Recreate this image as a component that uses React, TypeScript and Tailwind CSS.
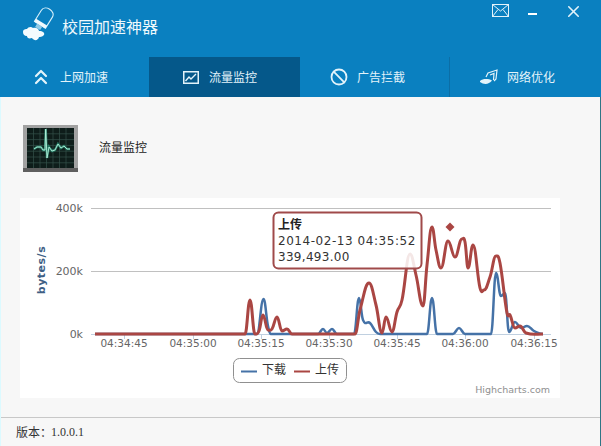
import { ChevronsUp, Ban, X } from "lucide-react";

const CJK = "font-['Noto_Sans_CJK_SC','Noto_Sans',sans-serif]";

const blue: [number, number][] = [
  [95, 334], [257, 334], [263.5, 299], [268, 326], [271, 334], [318, 334], [323, 329], [327, 333], [332, 329],
  [337, 334], [354, 334], [359, 298], [363, 320], [370, 323], [376, 332], [380, 334], [427, 334], [432, 298], [437, 334],
  [453, 334], [459, 328], [465, 334], [491, 334], [496, 273], [501, 296], [505, 293], [509, 332], [515, 322], [521, 328],
  [527, 326], [534, 331], [543, 334],
];

const red: [number, number][] = [
  [95, 334], [245, 334], [250, 300], [255, 334], [259, 331], [263, 315], [268, 330], [272, 329], [277, 317], [282, 331],
  [287, 329], [292, 334], [355, 334], [360, 310], [369, 283], [376, 305], [382, 333], [386, 317], [392, 332], [397, 312],
  [402, 300], [410, 254], [416, 275], [423, 306], [427, 265], [432, 227], [436, 250], [441, 268], [448, 241], [455, 257],
  [462, 239], [465, 242], [468, 268], [473, 245], [480, 288], [484, 290], [490, 277], [496, 256], [500, 263], [507, 313],
  [510, 315], [515, 328], [520, 326], [526, 333], [543, 334],
];

// hermite curve with slopes from the neighbours, so x never runs backwards on long flat parts
function toPath(pts: [number, number][]) {
  const slope = (i: number) => {
    if (i === 0 || i === pts.length - 1) return 0;
    const a = pts[i - 1];
    const b = pts[i];
    const c = pts[i + 1];
    // flat on a local peak or valley
    if ((b[1] - a[1]) * (c[1] - b[1]) <= 0) return 0;
    return (c[1] - a[1]) / (c[0] - a[0]);
  };
  let d = `M${pts[0][0]} ${pts[0][1]}`;
  for (let i = 0; i < pts.length - 1; i++) {
    const p1 = pts[i];
    const p2 = pts[i + 1];
    const dx = (p2[0] - p1[0]) / 2.4;
    const c1y = p1[1] + slope(i) * dx;
    const c2y = p2[1] - slope(i + 1) * dx;
    d += ` C${(p1[0] + dx).toFixed(1)} ${c1y.toFixed(1)} ${(p2[0] - dx).toFixed(1)} ${c2y.toFixed(1)} ${p2[0]} ${p2[1]}`;
  }
  return d;
}

const xLabels = [
  { x: 124, t: "04:34:45" },
  { x: 193, t: "04:35:00" },
  { x: 261, t: "04:35:15" },
  { x: 329, t: "04:35:30" },
  { x: 397, t: "04:35:45" },
  { x: 465, t: "04:36:00" },
  { x: 534, t: "04:36:15" },
];

function Logo() {
  return (
    <svg width="36" height="36" viewBox="0 0 36 36" fill="none">
      <g transform="translate(23.5 10.5) rotate(32)">
        <path d="M-6.5 8.5V-4.5C-6.5 -11.5 6.5 -11.5 6.5 -4.5V8.5Z" stroke="#d9f1fb" strokeWidth="1.1" />
        <rect x="-6.5" y="5.5" width="13" height="3.5" fill="#f0f9fd" />
        <rect x="-3" y="9" width="6" height="4" fill="#8fcbe8" />
      </g>
      <path d="M2 25 C2 22 5 22 6 22 C7 20 10 19 12 21 C15 20 18 22 18 24 C22 24 24 26 23 28 C21 30 19 30 18 30 C17 34 13 34 11 31 C8 32 6 31 6 29 C3 29 2 27 2 25 Z" fill="#f4fbfe" />
    </svg>
  );
}

function MonitorIcon() {
  const lines = [];
  for (let i = 1; i < 7; i++) lines.push(<path key={`v${i}`} d={`M${4 + i * 6.5} 3V43M4 ${3 + i * 5.8}H51`} stroke="#34524a" strokeWidth="0.7" />);
  const trace = "M11 24 L14 22 L18 22 L20 25 L22 25 L22.7 4 L24 33 L26 22 L29 26 L32 25 L35 19 L38 23 L41 21 L44 24 L47 24";
  return (
    <svg width="55" height="47" viewBox="0 0 55 47">
      <rect x="0" y="0" width="55" height="47" fill="#a2a2a2" />
      <rect x="0" y="43" width="55" height="4" fill="#5f5f5f" />
      <rect x="4" y="3" width="47" height="40" fill="#0e1d1a" />
      {lines}
      <path d={trace} fill="none" stroke="#2f9c80" strokeWidth="2.4" opacity="0.7" />
      <path d={trace} fill="none" stroke="#b4f3dc" strokeWidth="0.9" />
    </svg>
  );
}

function Chart() {
  return (
    <svg width="540" height="200" viewBox="20 198 540 200" className="block bg-white">
      <g stroke="#c0c0c0" strokeWidth="1">
        <path d="M91 208.5H551M91 271.5H551" />
        <path d="M91 334.5H551" stroke="#c0d0e0" />
        {xLabels.map((l) => (
          <path key={l.t} d={`M${l.x + 0.5} 334V339`} stroke="#c0d0e0" />
        ))}
      </g>
      <g fontFamily="'DejaVu Sans', sans-serif" fontSize="11" fill="#666">
        <text x="83" y="212" textAnchor="end">400k</text>
        <text x="83" y="275" textAnchor="end">200k</text>
        <text x="83" y="338" textAnchor="end">0k</text>
        {xLabels.map((l) => (
          <text key={l.t} x={l.x} y="347" textAnchor="middle" fontSize="10.5">{l.t}</text>
        ))}
        <text x="0" y="0" transform="translate(45 270) rotate(-90)" textAnchor="middle" fontSize="11" fontWeight="bold" letterSpacing="0.5" fill="#3f5f85">bytes/s</text>
        <text x="550" y="393" textAnchor="end" fontSize="9.5" fill="#909090">Highcharts.com</text>
      </g>

      <path d={toPath(blue)} fill="none" stroke="#4572a7" strokeWidth="2.5" strokeLinejoin="round" />
      <path d={toPath(red)} fill="none" stroke="#aa4643" strokeWidth="3" strokeLinejoin="round" />
      <path d="M450 222.5L454.5 227L450 231.5L445.5 227Z" fill="#aa4643" />

      <rect x="273.5" y="212.5" width="148" height="56" rx="5" fill="#ffffff" fillOpacity="0.87" stroke="#a04a4a" strokeWidth="2" />
      <g fontFamily="'DejaVu Sans', sans-serif" fontSize="12" fill="#333">
        <text x="278" y="229" fontFamily="'Noto Sans CJK SC', sans-serif" fontWeight="bold" fill="#222">上传</text>
        <text x="278" y="245" letterSpacing="0.55">2014-02-13 04:35:52</text>
        <text x="278" y="261" letterSpacing="0.3">339,493.00</text>
      </g>

      <rect x="233.5" y="358.5" width="113" height="24" rx="6" fill="#fff" stroke="#909090" />
      <path d="M241 371.5H257" stroke="#4572a7" strokeWidth="2" />
      <path d="M294 371.5H310" stroke="#aa4643" strokeWidth="2" />
      <g fontFamily="'Noto Sans CJK SC', sans-serif" fontSize="12" fill="#333">
        <text x="262" y="374">下载</text>
        <text x="315" y="374">上传</text>
      </g>
    </svg>
  );
}

function TabIcon({ name }: { name: string }) {
  if (name === "up") return <ChevronsUp size={24} strokeWidth={2.2} />;
  if (name === "ban") return <Ban size={18} strokeWidth={2.4} />;
  if (name === "chart")
    return (
      <svg width="16" height="13" viewBox="0 0 16 13" fill="none" stroke="currentColor">
        <rect x="0.75" y="0.75" width="14.5" height="11.5" strokeWidth="1.5" />
        <path d="M2.5 10L6 6L8 8L13 3" strokeWidth="1.4" />
      </svg>
    );
  return (
    <svg width="19" height="17" viewBox="0 0 19 17" fill="none" stroke="currentColor" strokeWidth="1.2">
      <path d="M7 8L9 4L18 1L17 10L15 12" />
      <path d="M11 6L15 4.5L14.5 11" />
      <path d="M1 12C4 9.5 9 9.5 13 11.5C10 15.5 5 16 1 13Z" fill="currentColor" stroke="none" />
    </svg>
  );
}

const tabs = [
  { label: "上网加速", icon: "up", w: "w-[149px]", gap: "gap-[7px]", pl: "pl-[29px]" },
  { label: "流量监控", icon: "chart", w: "w-[151px]", gap: "gap-[10px]", pl: "pl-[34px]", active: true },
  { label: "广告拦截", icon: "ban", w: "w-[149px]", gap: "gap-[9px]", pl: "pl-[30px]" },
  { label: "网络优化", icon: "net", w: "w-[152px]", gap: "gap-[9px]", pl: "pl-[29px]", border: true },
];

export default function App() {
  return (
    <div className={`w-[601px] h-[446px] flex flex-col overflow-hidden bg-[#f7f7f7] ${CJK}`}>
      <header className="h-[97px] bg-[#0a80c0] text-[#e3f3fa] flex flex-col">
        <div className="h-[57px] flex items-start">
          <div className="pl-[21px] pt-[7px]">
            <Logo />
          </div>
          <h1 className="ml-[5px] mt-[14px] text-[16px] leading-[24px] font-normal text-[#eef8fc]">校园加速神器</h1>
          <div className="ml-auto flex items-start pt-[3px] pr-[18px]">
            <svg width="17" height="13" viewBox="0 0 17 13" fill="none" stroke="currentColor" strokeWidth="1" className="mt-[1px]">
              <rect x="0.5" y="0.5" width="16" height="12" />
              <path d="M0.5 0.5L8.5 7L16.5 0.5M0.5 12.5L6 5.5M16.5 12.5L11 5.5" />
            </svg>
            <div className="ml-[19px] mt-[10px] w-[9px] h-[2px] bg-white" />
            <X size={19} strokeWidth={2} className="ml-[27px] mt-[-1px]" />
          </div>
        </div>
        <nav className="h-[40px] flex">
          {tabs.map((t) => (
            <div
              key={t.label}
              className={`${t.w} ${t.pl} ${t.gap} flex items-center text-[12px] ${t.active ? "bg-[#05588a]" : ""} ${t.border ? "border-l border-[#0b6ea6]" : ""}`}
            >
              <TabIcon name={t.icon} />
              <span>{t.label}</span>
            </div>
          ))}
        </nav>
      </header>

      <main className="flex-1 flex flex-col border-l border-l-[#dcfaff] border-r border-r-[#2f7585]">
        <div className="h-[101px] flex items-start pl-[22px] pt-[28px]">
          <MonitorIcon />
          <span className="ml-[21px] mt-[13px] text-[12px] leading-[18px] text-[#222]">流量监控</span>
        </div>
        <div className="pl-[19px]">
          <Chart />
        </div>
        <footer className="mt-[19px] flex-1 border-t border-[#c8c8c8] pl-[15px] flex items-center text-[12px] text-[#333]">
          <span>版本：</span>
          <span className="font-['Liberation_Serif',serif] ml-[-1px]">1.0.0.1</span>
        </footer>
      </main>
    </div>
  );
}
